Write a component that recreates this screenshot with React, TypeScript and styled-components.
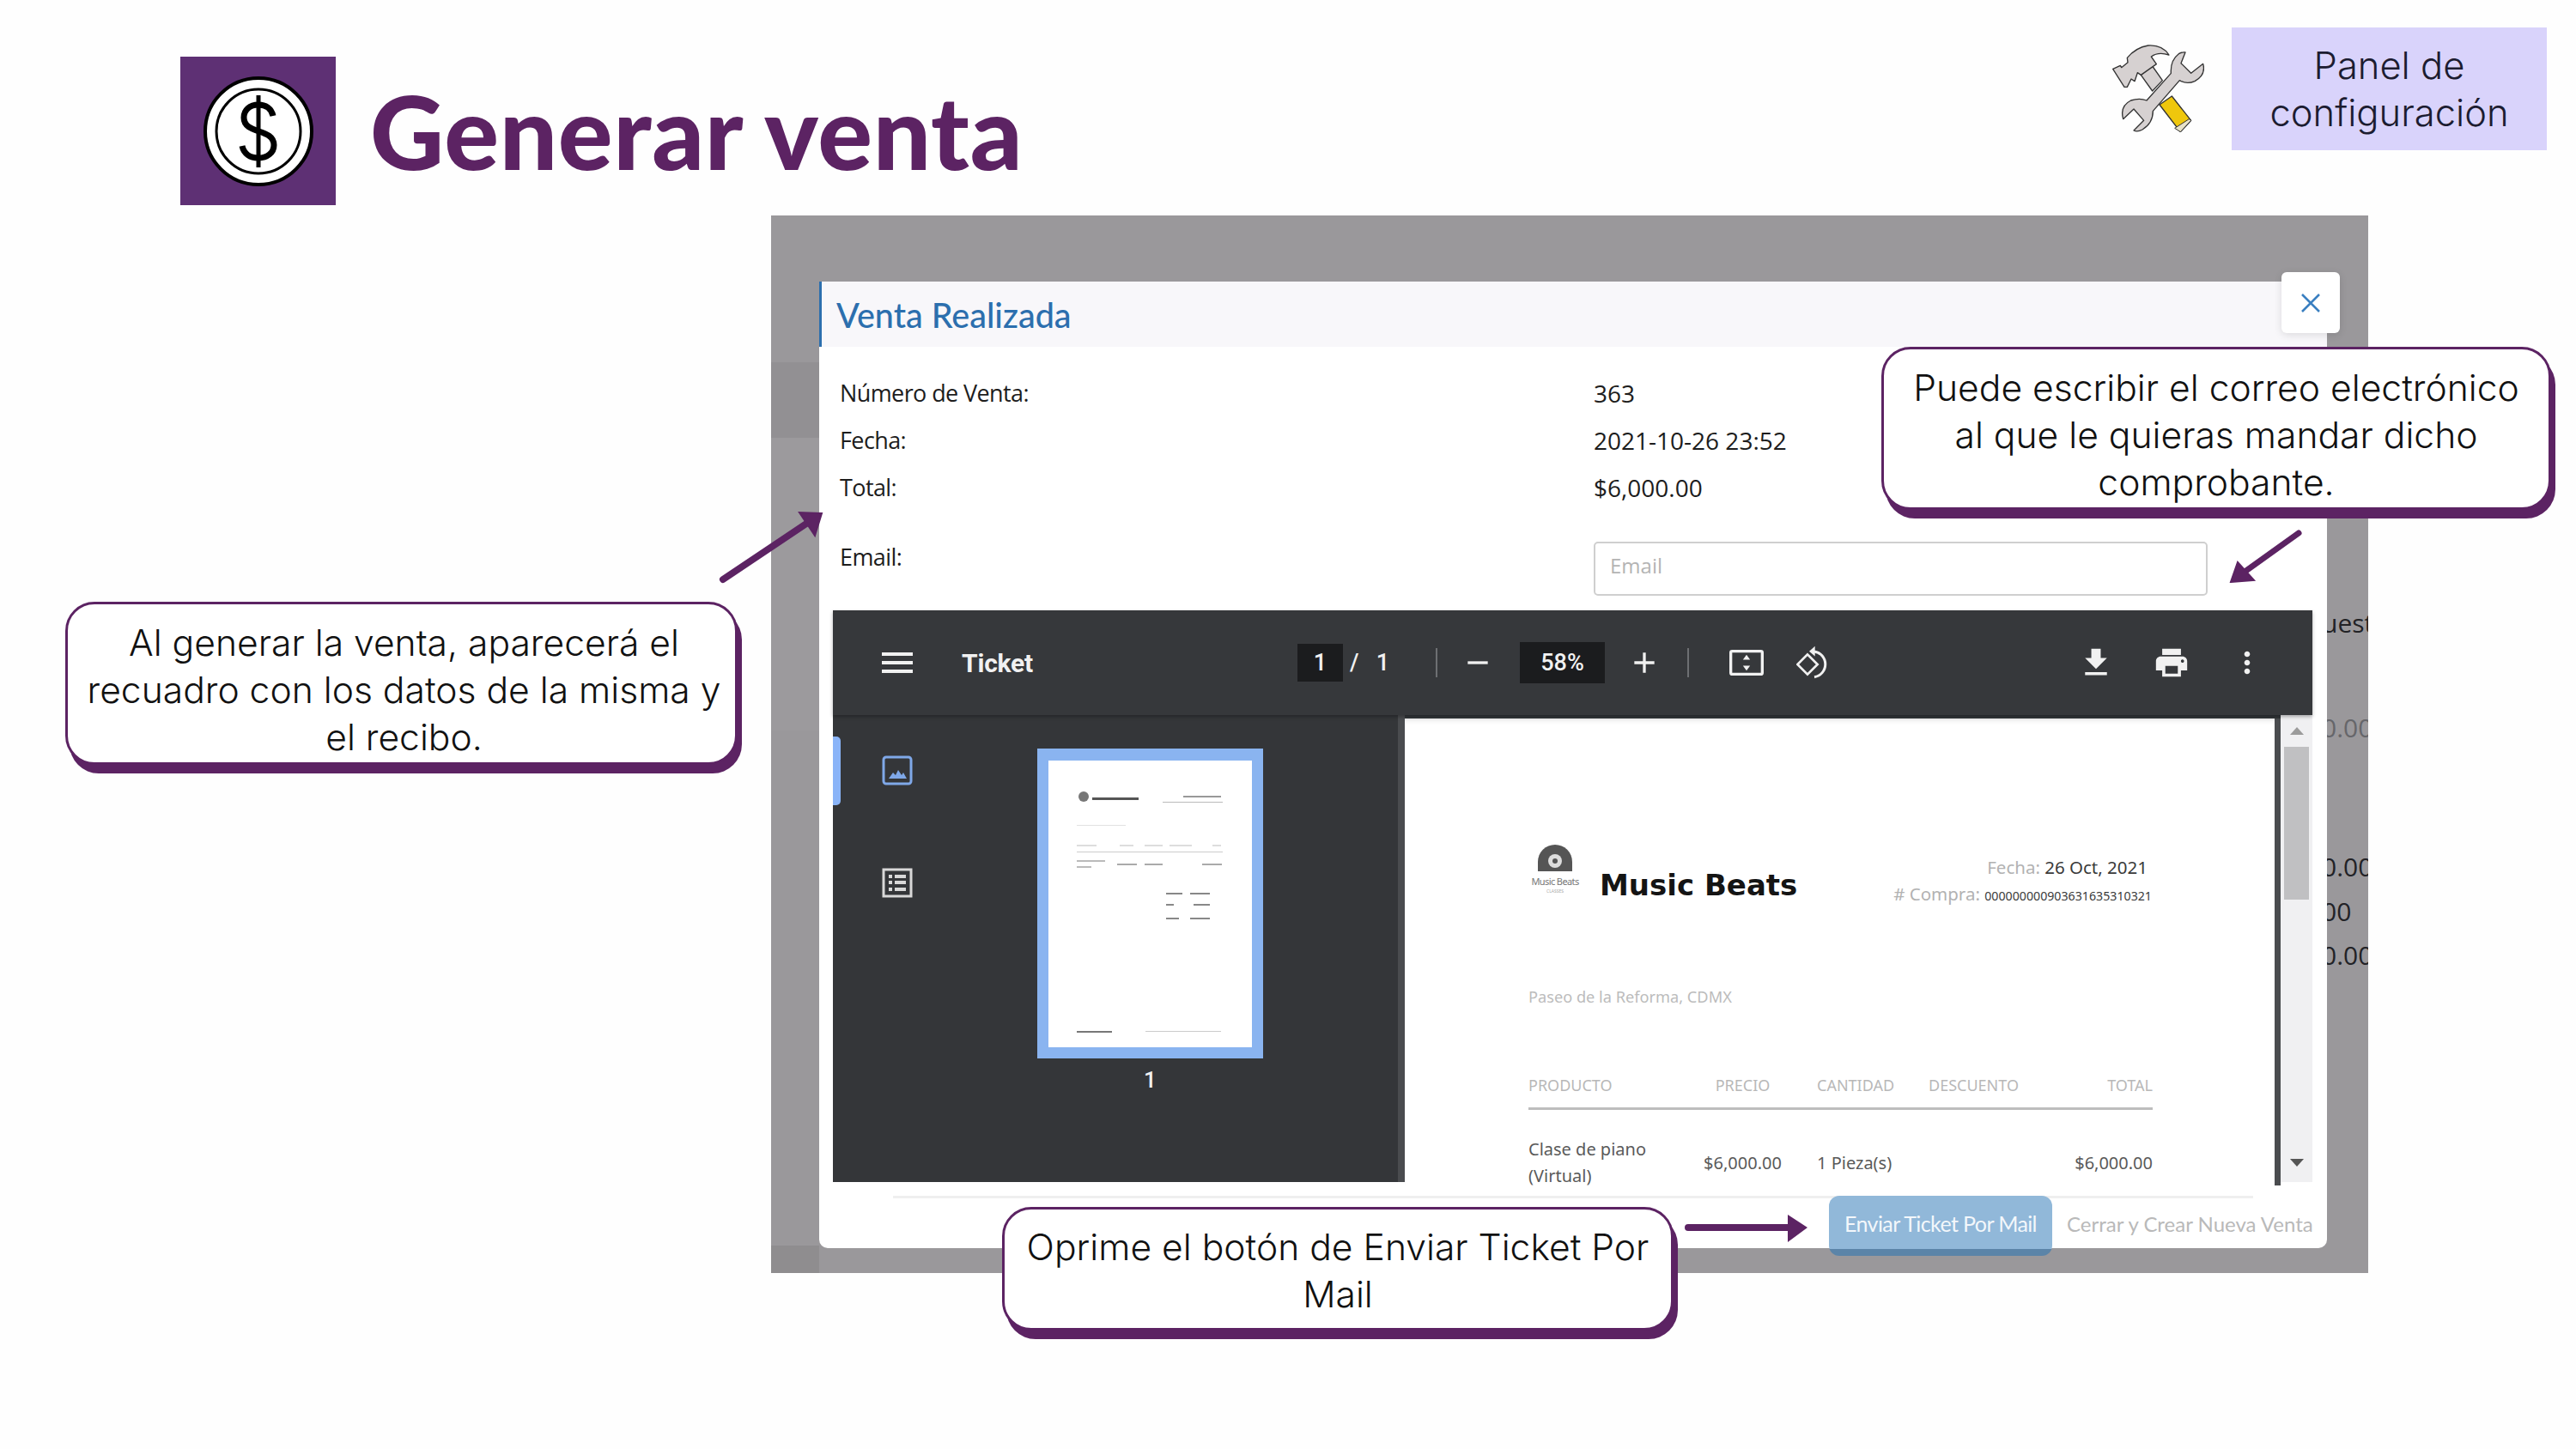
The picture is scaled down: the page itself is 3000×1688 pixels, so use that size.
import React from "react";
import styled, { createGlobalStyle } from "styled-components";

const PURPLE = "#5c2363";

const Global = createGlobalStyle`
  html, body { margin: 0; padding: 0; background: #fff; }
  * { box-sizing: border-box; }
`;

const Slide = styled.div`
  position: relative;
  width: 3000px;
  height: 1688px;
  overflow: hidden;
  background: #fefefe;
  font-family: "Open Sans", sans-serif;
`;

const Header = styled.header`
  display: flex;
  justify-content: space-between;
  height: 251px;
  padding: 32px 34px 0 210px;
`;

const Brand = styled.div`
  display: flex;
  align-items: center;
  gap: 40px;
  height: 173px;
  margin-top: 34px;
`;

const BrandMark = styled.div`
  display: flex;
  align-items: center;
  justify-content: center;
  width: 181px;
  height: 173px;
  background: #5e3074;
`;

const Title = styled.h1`
  margin: 0;
  font-family: "Lato", sans-serif;
  font-weight: 900;
  font-size: 119px;
  letter-spacing: 0.7px;
  line-height: 1;
  color: ${PURPLE};
`;

const ConfigGroup = styled.div`
  display: flex;
  align-items: flex-start;
  gap: 32px;
`;

const ToolsIcon = styled.svg`
  width: 107px;
  height: 102px;
  margin-top: 20px;
`;

const ConfigButton = styled.div`
  width: 367px;
  height: 143px;
  padding-top: 17px;
  background: #d9d3fb;
  color: #1c1c30;
  font-family: "Inter", sans-serif;
  font-weight: 300;
  font-size: 43.5px;
  line-height: 55px;
  text-align: center;
`;

const Backdrop = styled.section`
  display: flex;
  width: 1860px;
  height: 1232px;
  margin-left: 898px;
  padding-top: 77px;
  background: #9a989b;
`;

const LeftGutter = styled.div`
  width: 56px;
  margin-top: -77px;
  height: 1232px;
  background: linear-gradient(
    #9a989b 0 171px,
    #929093 171px 259px,
    #9c9a9d 259px 600px,
    #9a989b 600px 1200px,
    #8f8d8f 1200px
  );
`;

const Modal = styled.div`
  position: relative;
  display: flex;
  flex-direction: column;
  width: 1756px;
  height: 1126px;
  background: #fff;
  border-radius: 0 0 10px 10px;

  & > * {
    flex-shrink: 0;
  }
`;

const ModalHeader = styled.div`
  display: flex;
  align-items: center;
  height: 76px;
  padding-left: 17px;
  background: #f8f7fa;
  border-left: 3px solid #2c6fae;
`;

const ModalTitle = styled.h2`
  margin: 0;
  font-family: "Lato", sans-serif;
  font-weight: 500;
  font-size: 39.5px;
  color: #2c6fae;
`;

const CloseButton = styled.div`
  position: absolute;
  top: -11px;
  right: -15px;
  display: flex;
  align-items: center;
  justify-content: center;
  width: 68px;
  height: 71px;
  background: #fff;
  border-radius: 6px;
  box-shadow: 0 2px 10px rgba(0, 0, 0, 0.12);
`;

const InfoGrid = styled.div`
  display: grid;
  grid-template-columns: 878px 1fr;
  grid-auto-rows: 55px;
  padding: 26px 0 0 24px;
  font-family: "Open Sans", sans-serif;
  font-size: 27px;
  font-weight: 500;
  color: #1d1d1d;
  height: 227px;
`;

const InfoLabel = styled.div`
  display: flex;
  align-items: center;
  letter-spacing: -0.6px;
`;

const InfoValue = styled.div`
  display: flex;
  align-items: center;
  font-size: 28px;
`;

const EmailRow = styled.div`
  display: grid;
  grid-template-columns: 878px 715px;
  height: 63px;
  padding-left: 24px;
  font-size: 27px;
  font-weight: 500;
  letter-spacing: -0.6px;
  color: #1d1d1d;
`;

const EmailLabel = styled.div`
  line-height: 36px;
`;

const EmailInput = styled.div`
  display: flex;
  align-items: center;
  padding: 0 0 8px 17px;
  border: 2px solid #cfcfcf;
  border-radius: 5px;
  font-size: 24px;
  font-weight: 400;
  letter-spacing: 0;
  color: #b4b4b4;
`;

const Viewer = styled.div`
  display: flex;
  flex-direction: column;
  width: 1723px;
  height: 666px;
  margin: 17px 0 0 16px;
  background: #323639;
`;

const Toolbar = styled.div`
  display: flex;
  align-items: center;
  height: 122px;
  padding-left: 57px;
  background: #36383b;
  color: #f1f1f1;
  box-shadow: 0 2px 4px rgba(0, 0, 0, 0.3);
  z-index: 1;
`;

const Burger = styled.svg`
  width: 36px;
  height: 36px;
  flex: none;
`;

const DocName = styled.div`
  width: 391px;
  margin-left: 57px;
  font-family: "Roboto", sans-serif;
  font-weight: 700;
  font-size: 30px;
  letter-spacing: -0.2px;
`;

const PageInput = styled.div`
  width: 53px;
  height: 44px;
  background: #1b1c1e;
  font-family: "Roboto", sans-serif;
  font-weight: 500;
  font-size: 27px;
  line-height: 44px;
  text-align: center;
`;

const PageTotal = styled.div`
  display: flex;
  justify-content: space-between;
  width: 46px;
  margin-left: 8px;
  margin-right: 23px;
  font-family: "Roboto", sans-serif;
  font-weight: 500;
  font-size: 27px;
`;

const ToolSeparator = styled.div<{ $ml: number }>`
  width: 2px;
  height: 34px;
  margin-left: ${(p) => p.$ml}px;
  background: #6d6f72;
`;

const ToolIcon = styled.svg<{ $ml: number }>`
  flex: none;
  width: 40px;
  height: 40px;
  margin-left: ${(p) => p.$ml}px;
  fill: #f1f1f1;
`;

const ZoomBox = styled.div`
  width: 99px;
  height: 48px;
  margin-left: 29px;
  background: #1b1c1e;
  font-family: "Roboto", sans-serif;
  font-weight: 500;
  font-size: 27px;
  line-height: 48px;
  text-align: center;
`;

const ViewerBody = styled.div`
  display: flex;
  flex: 1;
  min-height: 0;
`;

const Sidebar = styled.aside`
  position: relative;
  display: flex;
  width: 666px;
  padding-left: 57px;
  background: #343639;
  border-right: 8px solid #4a4c4f;
`;

const SideIndicator = styled.div`
  position: absolute;
  left: 0;
  top: 25px;
  width: 9px;
  height: 80px;
  background: #8ab4f8;
  border-radius: 0 5px 5px 0;
`;

const SideTabs = styled.div`
  display: flex;
  flex-direction: column;
  gap: 96px;
  padding-top: 47px;
`;

const SideIcon = styled.svg`
  width: 36px;
  height: 35px;
`;

const ThumbColumn = styled.div`
  display: flex;
  flex-direction: column;
  align-items: center;
  width: 263px;
  margin: 39px 0 0 145px;
`;

const Thumb = styled.svg`
  width: 263px;
  height: 361px;
  flex: none;
`;

const ThumbNumber = styled.div`
  margin-top: 10px;
  font-family: "Roboto", sans-serif;
  font-weight: 500;
  font-size: 26px;
  color: #f1f1f1;
`;

const PageSheet = styled.div`
  flex: 1;
  height: 544px;
  margin-top: 4px;
  padding: 146px 143px 0 144px;
  overflow: hidden;
  background: #fff;
  font-family: "Noto Sans", sans-serif;
  border-right: 7px solid #4a4c4f;
  box-shadow: inset 0 6px 6px -4px rgba(0, 0, 0, 0.1);
`;

const SheetHead = styled.div`
  display: flex;
  justify-content: space-between;
  height: 166px;
`;

const SheetBrand = styled.div`
  display: flex;
  align-items: flex-start;
`;

const SheetLogo = styled.div`
  display: flex;
  flex-direction: column;
  align-items: center;
  width: 62px;
`;

const SheetLogoText = styled.div`
  margin-top: 5px;
  font-size: 11px;
  letter-spacing: -0.6px;
  line-height: 14px;
  color: #777;
  white-space: nowrap;
`;

const SheetLogoSub = styled.div`
  font-size: 5px;
  line-height: 8px;
  color: #aaa;
`;

const SheetName = styled.div`
  margin: 23px 0 0 21px;
  font-family: "DejaVu Sans", sans-serif;
  font-weight: 700;
  font-size: 34px;
  line-height: 50px;
  letter-spacing: 0;
  color: #141414;
`;

const SheetMeta = styled.div`
  display: flex;
  flex-direction: column;
  align-items: flex-end;
  padding-top: 12px;
  font-size: 20.5px;
  line-height: 31px;
  color: #b2b2b2;
`;

const MetaDate = styled.div`
  margin-right: 5px;
`;

const MetaValue = styled.span`
  font-size: 20.5px;
  color: #3a3a3a;
`;

const MetaCode = styled.span`
  font-size: 14.2px;
  color: #3a3a3a;
`;

const SheetAddress = styled.div`
  font-size: 18.2px;
  line-height: 24px;
  color: #bcbcbc;
`;

const ProductTable = styled.div`
  display: grid;
  grid-template-columns: 202px 95px 169px 130px 131px;
  margin-top: 79px;
  font-size: 18px;
`;

const HeadCell = styled.div<{ $align?: string; $pl?: number }>`
  height: 41px;
  padding-left: ${(p) => p.$pl || 0}px;
  border-bottom: 3px solid #bdbdbd;
  text-align: ${(p) => p.$align || "left"};
  line-height: 24px;
  color: #b8b8b8;
`;

const RowCell = styled.div<{ $align?: string; $pl?: number }>`
  display: flex;
  align-items: center;
  justify-content: ${(p) => p.$align || "flex-start"};
  height: 122px;
  padding-left: ${(p) => p.$pl || 0}px;
  line-height: 31px;
  font-size: 20px;
  color: #5a5a5a;
`;

const Scrollbar = styled.div`
  position: relative;
  width: 37px;
  height: 544px;
  background: #f0f0f2;
`;

const ScrollArrow = styled.div<{ $down?: boolean }>`
  position: absolute;
  left: 11px;
  ${(p) => (p.$down ? "bottom: 18px;" : "top: 14px;")}
  width: 0;
  height: 0;
  border-left: 8px solid transparent;
  border-right: 8px solid transparent;
  ${(p) => (p.$down ? "border-top: 9px solid #555;" : "border-bottom: 9px solid #9b9b9b;")}
`;

const ScrollThumb = styled.div`
  position: absolute;
  left: 4px;
  top: 37px;
  width: 29px;
  height: 178px;
  background: #c0c0c2;
`;

const ModalFooter = styled.div`
  position: relative;
  display: flex;
  justify-content: flex-end;
  flex: 1;
  padding: 16px 17px 0 0;

  &::before {
    content: "";
    position: absolute;
    left: 86px;
    top: 16px;
    width: 1584px;
    height: 3px;
    background: #efefef;
  }
`;

const SendButton = styled.div`
  position: relative;
  width: 260px;
  height: 70px;
  padding-top: 17px;
  border-radius: 12px;
  background: linear-gradient(#91b8d9 0 62px, #5b84a8 62px);
  color: #f3f7fb;
  font-family: "Lato", sans-serif;
  font-size: 25px;
  letter-spacing: -0.6px;
  text-align: center;
`;

const CloseSaleButton = styled.div`
  width: 286px;
  margin-left: 17px;
  padding-top: 18px;
  font-family: "Lato", sans-serif;
  font-size: 24px;
  color: #b9b9b9;
  white-space: nowrap;
`;

const RightGutter = styled.div`
  display: flex;
  flex-direction: column;
  width: 48px;
  overflow: hidden;
  font-size: 30px;
  line-height: 36px;
  white-space: nowrap;
`;

const GutterText = styled.div<{ $mt: number; $faded?: boolean }>`
  margin-top: ${(p) => p.$mt}px;
  margin-left: -6px;
  color: ${(p) => (p.$faded ? "#66666a" : "#222226")};
`;

const Callout = styled.div`
  position: absolute;
  display: flex;
  align-items: center;
  justify-content: center;
  background: #fff;
  border: 3px solid ${PURPLE};
  border-radius: 34px;
  box-shadow: 5px 10px 0 ${PURPLE};
  font-family: "Inter", sans-serif;
  font-weight: 300;
  font-size: 42.6px;
  line-height: 55px;
  color: #111;
  text-align: center;
`;

const SaleCallout = styled(Callout)`
  left: 76px;
  top: 701px;
  width: 783px;
  height: 190px;
  padding: 14px 10px 0 16px;
`;

const EmailCallout = styled(Callout)`
  left: 2191px;
  top: 404px;
  width: 780px;
  height: 190px;
  padding: 14px 20px 0;
`;

const SendCallout = styled(Callout)`
  left: 1167px;
  top: 1406px;
  width: 782px;
  height: 144px;
  padding: 4px 20px 0;
`;

const ArrowLayer = styled.svg`
  position: absolute;
  left: 0;
  top: 0;
  width: 3000px;
  height: 1688px;
  pointer-events: none;
`;

const MoneyBadge = () => (
  <svg width="130" height="130" viewBox="0 0 130 130">
    <circle cx="65" cy="65" r="62" fill="#fff" stroke="#000" strokeWidth="4" />
    <circle cx="65" cy="65" r="49" fill="#fff" stroke="#000" strokeWidth="3" />
    <path
      d="M82 47c-2-9-9-13-17-13-10 0-17 6-17 15 0 20 35 12 35 32 0 9-8 15-18 15-10 0-17-5-19-14"
      fill="none"
      stroke="#000"
      strokeWidth="7"
    />
    <path d="M65 23v84" stroke="#000" strokeWidth="5" />
  </svg>
);

const Tools = () => (
  <ToolsIcon viewBox="30 30 321 306">
    <path d="M195 240L238 210 305 295 268 335Z" fill="#efc70d" stroke="#333" strokeWidth="4" strokeLinejoin="round" />
    <path d="M248 322L298 290 305 295 268 335Z" fill="#e8e2c8" stroke="#333" strokeWidth="3" />
    <path d="M130 136L170 105 205 155 170 192Z" fill="#d6d1d1" stroke="#333" strokeWidth="4" strokeLinejoin="round" />
    <path
      d="M32 115L58 103 62 110 84 92 82 76Q112 40 155 33 205 30 228 66 190 54 166 72L184 98 130 136 118 128 108 158 96 150 82 178 72 178Z"
      fill="#d6d1d1"
      stroke="#333"
      strokeWidth="4"
      strokeLinejoin="round"
    />
    <path
      d="M285 57L270 95 305 130 347 97Q358 135 318 158 290 170 265 155L172 262Q172 305 135 327 118 336 105 330L140 295 105 255 68 290Q55 245 95 225 125 215 150 225L235 130Q232 85 262 62 275 55 285 57Z"
      fill="#d6d1d1"
      stroke="#333"
      strokeWidth="4"
      strokeLinejoin="round"
    />
  </ToolsIcon>
);

const ThumbPage = () => (
  <Thumb viewBox="0 0 263 361">
    <rect width="263" height="361" fill="#8ab4f0" />
    <g transform="translate(13 14)">
      <rect width="237" height="334" fill="#fff" />
      <circle cx="41" cy="42" r="6" fill="#777" />
      <rect x="51" y="43" width="54" height="3" fill="#555" />
      <rect x="157" y="41" width="44" height="2" fill="#999" />
      <rect x="133" y="48" width="70" height="1" fill="#bbb" />
      <rect x="33" y="75" width="57" height="1" fill="#e2e2e2" />
      {[[33, 23], [83, 16], [112, 21], [141, 26], [191, 10]].map(([x, w]) => (
        <rect key={x} x={x} y="98" width={w} height="2" fill="#ddd" />
      ))}
      <rect x="33" y="106" width="170" height="1" fill="#ccc" />
      <rect x="33" y="116" width="33" height="2" fill="#bbb" />
      <rect x="33" y="123" width="17" height="2" fill="#bbb" />
      {[[80, 23], [112, 21], [179, 23]].map(([x, w]) => (
        <rect key={x} x={x} y="120" width={w} height="2" fill="#aaa" />
      ))}
      {[[154, 19, 23], [167, 9, 19], [183, 15, 23]].map(([y, a, b]) => (
        <g key={y}>
          <rect x="137" y={y} width={a} height="2" fill="#888" />
          <rect x={188 - b} y={y} width={b} height="2" fill="#888" />
        </g>
      ))}
      <rect x="33" y="315" width="41" height="2" fill="#777" />
      <rect x="113" y="315" width="88" height="1" fill="#ccc" />
    </g>
  </Thumb>
);

export default function App() {
  return (
    <Slide>
      <Global />
      <Header>
        <Brand>
          <BrandMark>
            <MoneyBadge />
          </BrandMark>
          <Title>Generar venta</Title>
        </Brand>
        <ConfigGroup>
          <Tools />
          <ConfigButton>
            Panel de
            <br />
            configuración
          </ConfigButton>
        </ConfigGroup>
      </Header>

      <Backdrop>
        <LeftGutter />
        <Modal>
          <ModalHeader>
            <ModalTitle>Venta Realizada</ModalTitle>
          </ModalHeader>
          <CloseButton>
            <svg width="24" height="24" viewBox="0 0 24 24">
              <path d="M2 2l20 20M22 2L2 22" stroke="#3a7fc0" strokeWidth="2.5" />
            </svg>
          </CloseButton>

          <InfoGrid>
            <InfoLabel>Número de Venta:</InfoLabel>
            <InfoValue>363</InfoValue>
            <InfoLabel>Fecha:</InfoLabel>
            <InfoValue>2021-10-26 23:52</InfoValue>
            <InfoLabel>Total:</InfoLabel>
            <InfoValue>$6,000.00</InfoValue>
          </InfoGrid>
          <EmailRow>
            <EmailLabel>Email:</EmailLabel>
            <EmailInput>Email</EmailInput>
          </EmailRow>

          <Viewer>
            <Toolbar>
              <Burger viewBox="3 3 18 18" preserveAspectRatio="none" fill="#f1f1f1">
                <path d="M3 18h18v-2H3v2zm0-5h18v-2H3v2zm0-7v2h18V6H3z" />
              </Burger>
              <DocName>Ticket</DocName>
              <PageInput>1</PageInput>
              <PageTotal>
                <span>/</span>
                <span>1</span>
              </PageTotal>
              <ToolSeparator $ml={31} />
              <ToolIcon $ml={27} viewBox="0 0 24 24">
                <path d="M19 13H5v-2h14v2z" />
              </ToolIcon>
              <ZoomBox>58%</ZoomBox>
              <ToolIcon $ml={26} viewBox="0 0 24 24">
                <path d="M19 13h-6v6h-2v-6H5v-2h6V5h2v6h6v2z" />
              </ToolIcon>
              <ToolSeparator $ml={30} />
              <ToolIcon $ml={47} viewBox="0 0 24 24">
                <path d="M2 3h20a2 2 0 0 1 2 2v14a2 2 0 0 1-2 2H2a2 2 0 0 1-2-2V5a2 2 0 0 1 2-2zm0 2v14h20V5H2z" />
                <path d="M12 6.500l2.500 3.400h-5zM12 17.500l-2.500-3.400h5z" />
              </ToolIcon>
              <ToolIcon $ml={38} viewBox="0 0 24 24">
                <path d="M7.800 6.200l7 7-7 7-7-7z" fill="none" stroke="#f1f1f1" strokeWidth="1.6" />
                <path d="M12.600 4.200A9 9 0 0 1 12.600 22" fill="none" stroke="#f1f1f1" strokeWidth="1.8" />
                <path d="M13 0.500v7l-4-3.500z" />
              </ToolIcon>
              <ToolIcon $ml={289} viewBox="1 1 22 22">
                <path d="M19 9h-4V3H9v6H5l7 7 7-7zM5 18v2h14v-2H5z" />
              </ToolIcon>
              <ToolIcon $ml={48} viewBox="1 1 22 22">
                <path d="M19 8H5c-1.66 0-3 1.34-3 3v6h4v4h12v-4h4v-6c0-1.66-1.34-3-3-3zm-3 11H8v-5h8v5zm3-7c-.55 0-1-.45-1-1s.45-1 1-1 1 .45 1 1-.45 1-1 1zm-1-9H6v4h12V3z" />
              </ToolIcon>
              <ToolIcon $ml={48} viewBox="0 0 24 24">
                <path d="M12 8c1.1 0 2-.9 2-2s-.9-2-2-2-2 .9-2 2 .9 2 2 2zm0 2c-1.1 0-2 .9-2 2s.9 2 2 2 2-.9 2-2-.9-2-2-2zm0 6c-1.1 0-2 .9-2 2s.9 2 2 2 2-.9 2-2-.9-2-2-2z" />
              </ToolIcon>
            </Toolbar>
            <ViewerBody>
              <Sidebar>
                <SideIndicator />
                <SideTabs>
                  <SideIcon viewBox="0 0 36 35">
                    <rect x="2" y="2" width="32" height="31" rx="3" fill="none" stroke="#7fa8e8" strokeWidth="3" />
                    <path d="M8 27l5-7 3 3 3-6 4 6 2-3 4 7z" fill="#7fa8e8" />
                  </SideIcon>
                  <SideIcon viewBox="0 0 36 35">
                    <rect x="2" y="2" width="32" height="31" fill="none" stroke="#d8d8d8" strokeWidth="3" />
                    <path
                      d="M8 8h4v4H8zM15 8h13v4H15zM8 15h4v4H8zM15 15h13v4H15zM8 23h4v4H8zM15 23h13v4H15z"
                      fill="#d8d8d8"
                    />
                  </SideIcon>
                </SideTabs>
                <ThumbColumn>
                  <ThumbPage />
                  <ThumbNumber>1</ThumbNumber>
                </ThumbColumn>
              </Sidebar>
              <PageSheet>
                <SheetHead>
                  <SheetBrand>
                    <SheetLogo>
                      <svg width="42" height="32" viewBox="0 0 42 32">
                        <path d="M1 32V21a20 20 0 0 1 40 0v11z" fill="#555" />
                        <circle cx="21" cy="20" r="8" fill="#ddd" />
                        <circle cx="21" cy="20" r="3" fill="#555" />
                      </svg>
                      <SheetLogoText>Music Beats</SheetLogoText>
                      <SheetLogoSub>CLASSES</SheetLogoSub>
                    </SheetLogo>
                    <SheetName>Music Beats</SheetName>
                  </SheetBrand>
                  <SheetMeta>
                    <MetaDate>
                      Fecha: <MetaValue>26 Oct, 2021</MetaValue>
                    </MetaDate>
                    <div>
                      # Compra: <MetaCode>000000000903631635310321</MetaCode>
                    </div>
                  </SheetMeta>
                </SheetHead>
                <SheetAddress>Paseo de la Reforma, CDMX</SheetAddress>
                <ProductTable>
                  <HeadCell>PRODUCTO</HeadCell>
                  <HeadCell $align="center">PRECIO</HeadCell>
                  <HeadCell $pl={39}>CANTIDAD</HeadCell>
                  <HeadCell>DESCUENTO</HeadCell>
                  <HeadCell $align="right">TOTAL</HeadCell>
                  <RowCell>
                    <span>
                      Clase de piano
                      <br />
                      (Virtual)
                    </span>
                  </RowCell>
                  <RowCell $align="center">$6,000.00</RowCell>
                  <RowCell $pl={39}>1 Pieza(s)</RowCell>
                  <RowCell />
                  <RowCell $align="flex-end">$6,000.00</RowCell>
                </ProductTable>
              </PageSheet>
              <Scrollbar>
                <ScrollArrow />
                <ScrollThumb />
                <ScrollArrow $down />
              </Scrollbar>
            </ViewerBody>
          </Viewer>

          <ModalFooter>
            <SendButton>Enviar Ticket Por Mail</SendButton>
            <CloseSaleButton>Cerrar y Crear Nueva Venta</CloseSaleButton>
          </ModalFooter>
        </Modal>
        <RightGutter>
          <GutterText $mt={380}>uest</GutterText>
          <GutterText $mt={86} $faded>
            0.00
          </GutterText>
          <GutterText $mt={126}>0.00</GutterText>
          <GutterText $mt={16}>00</GutterText>
          <GutterText $mt={15}>0.00</GutterText>
        </RightGutter>
      </Backdrop>

      <SaleCallout>
        Al generar la venta, aparecerá el recuadro con los datos de la misma y el recibo.
      </SaleCallout>
      <EmailCallout>
        Puede escribir el correo electrónico al que le quieras mandar dicho comprobante.
      </EmailCallout>
      <SendCallout>Oprime el botón de Enviar Ticket Por Mail</SendCallout>

      <ArrowLayer viewBox="0 0 3000 1688">
        <path d="M842 675L945 606" stroke={PURPLE} strokeWidth="8" strokeLinecap="round" />
        <path d="M957 598L931 597 949 624Z" fill={PURPLE} stroke={PURPLE} strokeWidth="2" />
        <path d="M2677 621L2610 669" stroke={PURPLE} strokeWidth="7" strokeLinecap="round" />
        <path d="M2598 678L2625 676 2606 655Z" fill={PURPLE} stroke={PURPLE} strokeWidth="2" />
        <path d="M1966 1430H2085" stroke={PURPLE} strokeWidth="8" strokeLinecap="round" />
        <path d="M2082 1415L2105 1430 2082 1447Z" fill={PURPLE} />
      </ArrowLayer>
    </Slide>
  );
}
